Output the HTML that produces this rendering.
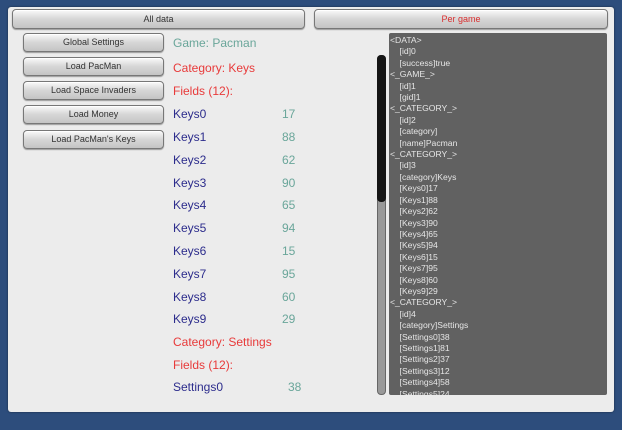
<!DOCTYPE html>
<html><head><style>
*{margin:0;padding:0;box-sizing:border-box}
body{width:622px;height:430px;background:#2d4d7c;position:relative;overflow:hidden;font-family:"Liberation Sans",sans-serif}
.panel{position:absolute;left:8px;top:7px;width:606px;height:405px;background:#ececec;border-radius:3px;box-shadow:0 0 2px #1a2a40}
.btn{position:absolute;border:1px solid #777;border-radius:4px;background:linear-gradient(#fafafa,#d6d6d6 50%,#c4c4c4);box-shadow:inset 0 1px 0 #fff,0 1px 1px #999;font-size:9px;text-align:center;color:#333}
.t{position:absolute;font-size:12px;white-space:nowrap}
.k{color:#2c2c8c}.v{color:#6aa69a}.r{color:#e83a3a}
.box{position:absolute;left:389px;top:33px;width:218px;height:362px;background:#616161;color:#e6e6e6;font-size:8.6px;line-height:11.4px;padding:2px 0 0 1px;overflow:hidden;white-space:pre;border-radius:2px}
</style></head><body>
<div class="panel"></div>
<div class="btn" style="left:12px;top:9px;width:293px;height:20px;line-height:18px">All data</div>
<div class="btn" style="left:314px;top:9px;width:294px;height:20px;line-height:18px;color:#d83030">Per game</div>
<div class="btn" style="left:23px;top:33px;width:141px;height:19px;line-height:17px">Global Settings</div>
<div class="btn" style="left:23px;top:57px;width:141px;height:19px;line-height:17px">Load PacMan</div>
<div class="btn" style="left:23px;top:81px;width:141px;height:19px;line-height:17px">Load Space Invaders</div>
<div class="btn" style="left:23px;top:105px;width:141px;height:19px;line-height:17px">Load Money</div>
<div class="btn" style="left:23px;top:130px;width:141px;height:19px;line-height:17px">Load PacMan's Keys</div>
<div class="t v" style="left:173px;top:36px">Game: Pacman</div>
<div class="t r" style="left:173px;top:61px">Category: Keys</div>
<div class="t r" style="left:173px;top:84px">Fields (12):</div>
<div class="t k" style="left:173px;top:107px">Keys0</div><div class="t v" style="left:282px;top:107px">17</div>
<div class="t k" style="left:173px;top:130px">Keys1</div><div class="t v" style="left:282px;top:130px">88</div>
<div class="t k" style="left:173px;top:153px">Keys2</div><div class="t v" style="left:282px;top:153px">62</div>
<div class="t k" style="left:173px;top:176px">Keys3</div><div class="t v" style="left:282px;top:176px">90</div>
<div class="t k" style="left:173px;top:198px">Keys4</div><div class="t v" style="left:282px;top:198px">65</div>
<div class="t k" style="left:173px;top:221px">Keys5</div><div class="t v" style="left:282px;top:221px">94</div>
<div class="t k" style="left:173px;top:244px">Keys6</div><div class="t v" style="left:282px;top:244px">15</div>
<div class="t k" style="left:173px;top:267px">Keys7</div><div class="t v" style="left:282px;top:267px">95</div>
<div class="t k" style="left:173px;top:290px">Keys8</div><div class="t v" style="left:282px;top:290px">60</div>
<div class="t k" style="left:173px;top:312px">Keys9</div><div class="t v" style="left:282px;top:312px">29</div>
<div class="t r" style="left:173px;top:335px">Category: Settings</div>
<div class="t r" style="left:173px;top:358px">Fields (12):</div>
<div class="t k" style="left:173px;top:380px">Settings0</div><div class="t v" style="left:288px;top:380px">38</div>
<div style="position:absolute;left:377px;top:55px;width:9px;height:340px;background:#999;border-radius:4px;border:1px solid #666"></div>
<div style="position:absolute;left:377px;top:55px;width:9px;height:147px;background:#151515;border-radius:4px"></div>
<div class="box">&lt;DATA&gt;
    [id]0
    [success]true
&lt;_GAME_&gt;
    [id]1
    [gid]1
&lt;_CATEGORY_&gt;
    [id]2
    [category]
    [name]Pacman
&lt;_CATEGORY_&gt;
    [id]3
    [category]Keys
    [Keys0]17
    [Keys1]88
    [Keys2]62
    [Keys3]90
    [Keys4]65
    [Keys5]94
    [Keys6]15
    [Keys7]95
    [Keys8]60
    [Keys9]29
&lt;_CATEGORY_&gt;
    [id]4
    [category]Settings
    [Settings0]38
    [Settings1]81
    [Settings2]37
    [Settings3]12
    [Settings4]58
    [Settings5]24</div>
</body></html>
